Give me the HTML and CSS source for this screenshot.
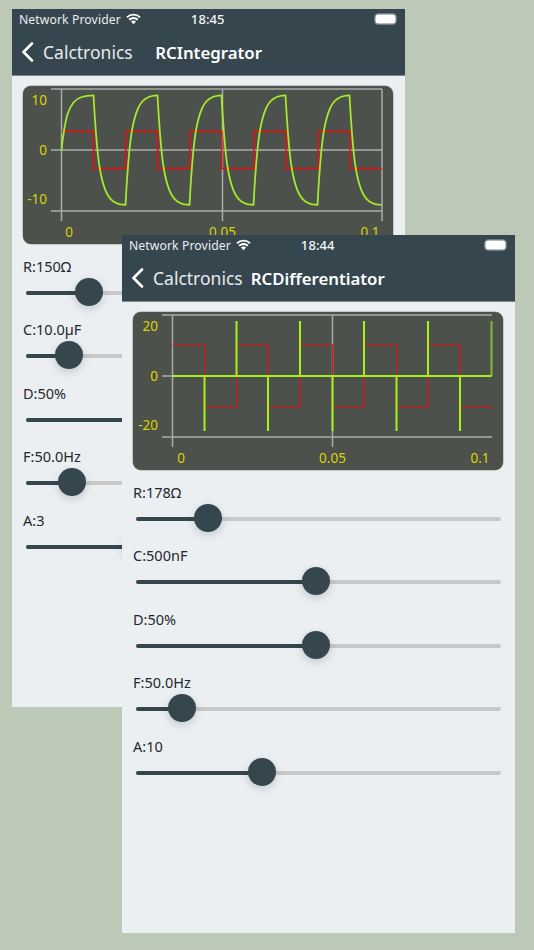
FILE: index.html
```html
<!DOCTYPE html>
<html lang="en">
<head>
<meta charset="utf-8">
<title>Calctronics</title>
<link rel="stylesheet" href="styles.css">
</head>
<body>
<svg class="defs" width="0" height="0" aria-hidden="true">
  <symbol id="wifi" viewBox="0 0 16 12">
    <path d="M8 11.8 5.3 9a3.7 3.7 0 0 1 5.4 0Z" fill="#fff"/>
    <path d="M3.4 7.1a6.5 6.5 0 0 1 9.2 0M1 4.5a9.9 9.9 0 0 1 14 0" fill="none" stroke="#fff" stroke-width="2"/>
  </symbol>
  <symbol id="chev" viewBox="0 0 13 20">
    <path d="M11 1.5 2.5 10 11 18.5" fill="none" stroke="#fff" stroke-width="2.6" stroke-linecap="round" stroke-linejoin="round"/>
  </symbol>
</svg>

<section class="phone phone-back">
  <header class="head">
    <div class="status">
      <span class="provider">Network Provider</span>
      <svg class="wifi"><use href="#wifi"/></svg>
      <span class="time">18:45</span>
      <span class="battery"></span>
    </div>
    <div class="nav">
      <svg class="chev"><use href="#chev"/></svg>
      <span class="back">Calctronics</span>
      <span class="title title-int">RCIntegrator</span>
    </div>
  </header>
  <div class="chart">
    <svg class="plot" width="370" height="158" viewBox="0 0 370 158">
      <path class="axis" d="M38.5 3V135M199.5 3V135M359 3V135M28 3H359M28 64H359M28 125H359"/>
      <path class="red" d="M38.5 45.5H70.5V82.5H102.6V45.5H134.6V82.5H166.7V45.5H198.8V82.5H230.8V45.5H262.9V82.5H294.9V45.5H327V82.5H359"/>
      <path class="green" d="M38.5 64c4 -36.6 8 -42.6 12 -47.5c2.67 -3.3 5.33 -4.7 8 -5.5c4 -1.3 8 -1.7 12 -1.7
        c4 73.3 8 85.2 12 95.1c2.67 6.6 5.33 9.3 8 11c4 2.6 8 3.4 12 3.4
        c4 -73.3 8 -85.2 12 -95.1c2.67 -6.6 5.33 -9.3 8 -11c4 -2.6 8 -3.4 12 -3.4
        c4 73.3 8 85.2 12 95.1c2.67 6.6 5.33 9.3 8 11c4 2.6 8 3.4 12 3.4
        c4 -73.3 8 -85.2 12 -95.1c2.67 -6.6 5.33 -9.3 8 -11c4 -2.6 8 -3.4 12 -3.4
        c4 73.3 8 85.2 12 95.1c2.67 6.6 5.33 9.3 8 11c4 2.6 8 3.4 12 3.4
        c4 -73.3 8 -85.2 12 -95.1c2.67 -6.6 5.33 -9.3 8 -11c4 -2.6 8 -3.4 12 -3.4
        c4 73.3 8 85.2 12 95.1c2.67 6.6 5.33 9.3 8 11c4 2.6 8 3.4 12 3.4
        c4 -73.3 8 -85.2 12 -95.1c2.67 -6.6 5.33 -9.3 8 -11c4 -2.6 8 -3.4 12 -3.4
        c4 73.3 8 85.2 12 95.1c2.67 6.6 5.33 9.3 8 11c4 2.6 8 3.4 12 3.4"/>
      <text class="tick end" x="24" y="18.5">10</text>
      <text class="tick end" x="24" y="68.5">0</text>
      <text class="tick end" x="24" y="117.5">-10</text>
      <text class="tick mid" x="46" y="150.5">0</text>
      <text class="tick mid" x="199.5" y="150.5">0.05</text>
      <text class="tick mid" x="347" y="150.5">0.1</text>
    </svg>
  </div>
  <div class="controls">
    <div class="row"><div class="label">R:150Ω</div><div class="track"><div class="fill" style="width:17.3%"><span class="thumb"></span></div></div></div>
    <div class="row"><div class="label">C:10.0µF</div><div class="track"><div class="fill" style="width:11.8%"><span class="thumb"></span></div></div></div>
    <div class="row"><div class="label">D:50%</div><div class="track"><div class="fill" style="width:49.3%"><span class="thumb"></span></div></div></div>
    <div class="row"><div class="label">F:50.0Hz</div><div class="track"><div class="fill" style="width:12.6%"><span class="thumb"></span></div></div></div>
    <div class="row"><div class="label">A:3</div><div class="track"><div class="fill" style="width:30%"><span class="thumb"></span></div></div></div>
  </div>
</section>

<section class="phone phone-front">
  <header class="head">
    <div class="status">
      <span class="provider">Network Provider</span>
      <svg class="wifi"><use href="#wifi"/></svg>
      <span class="time">18:44</span>
      <span class="battery"></span>
    </div>
    <div class="nav">
      <svg class="chev"><use href="#chev"/></svg>
      <span class="back">Calctronics</span>
      <span class="title title-diff">RCDifferentiator</span>
    </div>
  </header>
  <div class="chart">
    <svg class="plot" width="370" height="158" viewBox="0 0 370 158">
      <path class="axis" d="M39.5 3V135M199.5 3V135M29 3H359M29 64H359M29 125H359"/>
      <path class="red thin" d="M39.5 33H71.5V95H103.5V33H135V95H167V33H199.5V95H231V33H263.5V95H295V33H327V95H359"/>
      <path class="green spike" d="M39.5 64H358M71.5 64V119M103.5 64V9M135 64V119M167 64V9M199.5 64V119M231 64V9M263.5 64V119M295 64V9M327 64V119"/>
      <path class="green spike dim" d="M358.5 64V9"/>
      <text class="tick end" x="25" y="18.5">20</text>
      <text class="tick end" x="25" y="68.5">0</text>
      <text class="tick end" x="25" y="117.5">-20</text>
      <text class="tick mid" x="48" y="150.5">0</text>
      <text class="tick mid" x="199.5" y="150.5">0.05</text>
      <text class="tick mid" x="347" y="150.5">0.1</text>
    </svg>
  </div>
  <div class="controls">
    <div class="row"><div class="label">R:178Ω</div><div class="track"><div class="fill" style="width:19.7%"><span class="thumb"></span></div></div></div>
    <div class="row"><div class="label">C:500nF</div><div class="track"><div class="fill" style="width:49.3%"><span class="thumb"></span></div></div></div>
    <div class="row"><div class="label">D:50%</div><div class="track"><div class="fill" style="width:49.3%"><span class="thumb"></span></div></div></div>
    <div class="row"><div class="label">F:50.0Hz</div><div class="track"><div class="fill" style="width:12.6%"><span class="thumb"></span></div></div></div>
    <div class="row"><div class="label">A:10</div><div class="track"><div class="fill" style="width:34.5%"><span class="thumb"></span></div></div></div>
  </div>
</section>
</body>
</html>
```

FILE: styles.css
```css
* { box-sizing: border-box; }
html, body { margin: 0; height: 100%; }
body {
  position: relative;
  width: 534px;
  height: 950px;
  overflow: hidden;
  background: #bcc9b6;
  font-family: "Noto Sans", sans-serif;
  color: #23292c;
}
.defs { position: absolute; }

/* The two screenshots sit on a free canvas */
.phone {
  position: absolute;
  height: 698px;
  background: #ebeff2;
  overflow: hidden;
}
.phone-back { left: 12px; top: 9px; width: 393px; }
.phone-front { left: 122px; top: 235px; width: 392.5px; }

.head {
  height: 67px;
  background: #36464f;
  border-bottom: 1px solid #7d8a91;
  color: #fff;
}
.status {
  display: flex;
  align-items: center;
  height: 20px;
  padding: 0 7px;
  font-size: 12.2px;
}
.provider { color: #e9edef; letter-spacing: .1px; }
.wifi { width: 15px; height: 11.5px; margin-left: 5px; }
.time {
  margin-left: 50px;
  font-size: 13px;
  font-weight: 500;
  letter-spacing: .1px;
  color: #f4f6f7;
}
.battery {
  position: relative;
  width: 23px;
  height: 12px;
  margin-left: auto;
  margin-right: 1px;
  border: 1.5px solid #6f7d85;
  border-radius: 4px;
  box-shadow: inset 0 0 0 .5px #6f7d85;
  background: #fff;
  background-clip: padding-box;
}
.nav {
  display: flex;
  align-items: center;
  height: 46px;
  padding-left: 9px;
}
.chev { width: 13px; height: 20px; }
.back { margin-left: 9px; font-size: 17.5px; color: #e6eaec; }
.title { font-size: 16.8px; font-weight: 600; color: #fff; }
.title-int { margin-left: 22.5px; }
.title-diff { margin-left: 8px; }

.chart {
  width: 370px;
  height: 158px;
  margin: 10px 0 0 11px;
  background: #4d514c;
  border-radius: 8px;
  box-shadow: 0 0 0 .5px #9aa09c;
}
.plot { display: block; }
.axis { fill: none; stroke: #a9adab; stroke-width: 1.5; }
.red { fill: none; stroke: #e80f0f; stroke-width: 1.5; }
.red.thin { stroke-width: 1.2; }
.green { fill: none; stroke: #a6e82c; stroke-width: 1.8; }
.green.spike { stroke: #a6f01e; stroke-width: 2; }
.green.dim { opacity: .65; }
.tick { fill: #d8d400; font-size: 13.5px; font-family: "Noto Sans", sans-serif; }
.tick.end { text-anchor: end; }
.tick.mid { text-anchor: middle; }

.controls { margin-top: 12px; padding-left: 11px; }
.row { height: 63.4px; }
.label { height: 20px; font-size: 14.5px; line-height: 20px; }
.track {
  position: relative;
  top: 15px;
  width: 365px;
  height: 4px;
  margin-left: 3px;
  border-radius: 2px;
  background: #c8c8c8;
}
.fill {
  position: relative;
  height: 100%;
  border-radius: 2px;
  background: #36464f;
}
.thumb {
  position: absolute;
  right: -14px;
  top: -13px;
  width: 28px;
  height: 28px;
  border-radius: 50%;
  background: #36464f;
  box-shadow: 0 3px 8px rgba(0, 0, 0, .16);
}
```
